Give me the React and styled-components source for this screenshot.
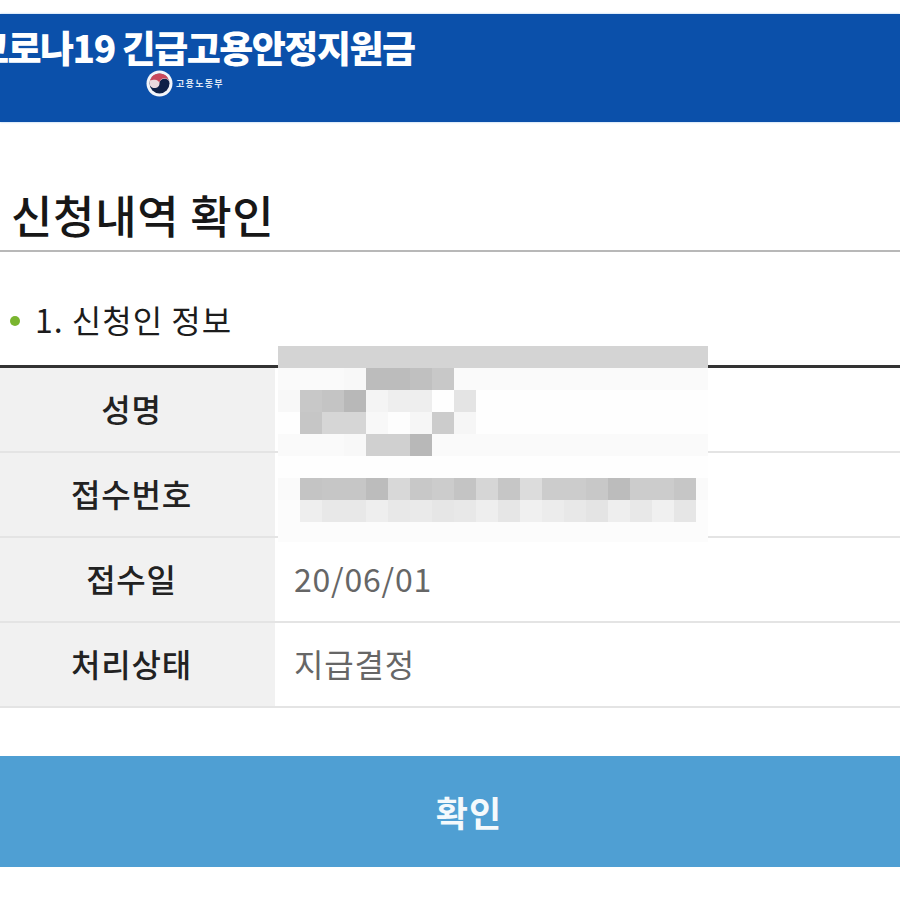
import React from "react";
import styled, { createGlobalStyle } from "styled-components";

const Global = createGlobalStyle`
  html, body { margin: 0; padding: 0; background: #fff; }
  body { font-family: "Noto Sans CJK KR", "Noto Sans", sans-serif; }
`;
const Page = styled.div`
  position: relative; width: 900px; height: 900px; overflow: hidden; background: #fff;
  padding-top: 14px; box-sizing: border-box; color: #1c1c1c;
`;
const Banner = styled.header`
  height: 108px; background: #0b50aa; box-sizing: border-box; padding-top: 11px;
  box-shadow: 0 0 2px #9cc4ee; display: flex; flex-direction: column; overflow: hidden;
`;
const BannerTitle = styled.div`
  font-size: 37px; font-weight: 900; line-height: 44px; color: #fff; white-space: nowrap;
  margin-left: -25px; letter-spacing: -1.5px;
`;
const Ministry = styled.div`
  display: flex; align-items: center; gap: 3px; margin: 0 0 0 146px; height: 28px;
`;
const MinistryName = styled.span`
  font-size: 9px; font-weight: 700; color: #dfe8f5; letter-spacing: 1.3px;
`;
const Heading = styled.h1`
  margin: 0; height: 130px; box-sizing: border-box; padding: 64px 0 0 11px;
  font-size: 45px; line-height: 58px; font-weight: 500; color: #171717;
  border-bottom: 2px solid #b8b8b8; letter-spacing: 0.7px;
`;
const Section = styled.h2`
  margin: 0; height: 113px; box-sizing: border-box; padding: 44px 0 0 10px;
  display: flex; align-items: flex-start; gap: 15px;
  font-size: 32px; line-height: 46px; font-weight: 400; color: #1c1c1c; letter-spacing: 1px;
`;
const Dot = styled.i`
  width: 10px; height: 10px; border-radius: 50%; background: #7ab52f; margin-top: 20px; flex: none;
`;
const Table = styled.div`
  border-top: 3px solid #333;
`;
const Row = styled.div`
  display: grid; grid-template-columns: 275px 1fr; height: 85px; box-sizing: border-box;
  border-bottom: 2px solid #e4e4e4; font-size: 32px;
`;
const Label = styled.div`
  background: #f1f1f1; display: flex; align-items: center; justify-content: center;
  font-weight: 500; color: #222; padding: 0 12px 4px 0; letter-spacing: 0.8px;
`;
const Value = styled.div`
  display: flex; align-items: center; padding: 0 0 4px 19px; color: #666; font-weight: 400;
  letter-spacing: 0.8px;
`;
const ConfirmButton = styled.button`
  display: flex; align-items: center; justify-content: center; width: 100%; height: 111px;
  margin-top: 48px; border: 0; padding: 0 0 0 38px; background: #4f9fd3; color: #f4f9fc;
  font: 700 35px "Noto Sans CJK KR", sans-serif; letter-spacing: 1px;
`;
const Mosaic = styled.div`
  position: absolute; left: 278px; top: 346px; width: 430px; display: grid;
  grid-template-columns: repeat(20, 22px); grid-auto-rows: 22px; overflow: hidden; height: 196px;
`;
const Tile = styled.div`
  background: ${(p) => p.$c};
`;

const W = "fefefe", F = "fafafa";
const rows = [
  Array(20).fill("d4d4d4"),
  [F, F, F, "f8f8f8", "bcbcbc", "bcbcbc", "c0c0c0", "c8c8c8", ...Array(12).fill(F)],
  ["f8f8f8", "c8c8c8", "c4c4c4", "b8b8b8", "f4f4f4", "eeeeee", "eeeeee", W, "e4e4e4", ...Array(11).fill(W)],
  [W, "c6c6c6", "d6d6d6", "d6d6d6", "f8f8f8", "fdfdfd", "f6f6f6", "cccccc", "f6f6f6", ...Array(11).fill(W)],
  [F, F, F, "f8f8f8", "d0d0d0", "d0d0d0", "b8b8b8", ...Array(13).fill(F)],
  Array(20).fill(W),
  [F, "c4c4c4", "c6c6c6", "c6c6c6", "bcbcbc", "d8d8d8", "c8c8c8", "cccccc", "c4c4c4", "d6d6d6", "c6c6c6", "dcdcdc", "cccccc", "cccccc", "c8c8c8", "bcbcbc", "cccccc", "cccccc", "c6c6c6", F],
  ["fcfcfc", "eeeeee", "e8e8e8", "e8e8e8", "eeeeee", "e8e8e8", "eaeaea", "e6e6e6", "e8e8e8", "eeeeee", "e6e6e6", "f0f0f0", "ececec", "e8e8e8", "e4e4e4", "eeeeee", "e8e8e8", "f0f0f0", "e6e6e6", "fcfcfc"],
  Array(20).fill("fcfcfc"),
];

const Emblem = () => (
  <svg width="27" height="27" viewBox="0 0 27 27" aria-hidden="true">
    <circle cx="13.5" cy="13.5" r="13" fill="#f2f5fa" />
    <circle cx="13.5" cy="13.5" r="10" fill="#0e2148" />
    <path d="M3.5 13.5a10 10 0 0 1 20 0c0-2.8-2.2-4.8-4.9-4.8s-5.1 2-5.1 4.8-2.3 4.6-5 4.6-5-2-5-4.6z" fill="#e9d9de" />
    <path d="M4 10.5a10 10 0 0 1 19 0c-1-1.500-2.600-2.200-4.400-2.200-2.800 0-5.100 2-5.100 4.800-.6-2-2.400-3.300-4.600-3.300-2 0-3.800.2-4.900.7z" fill="#c9485c" />
  </svg>
);

const info = [
  ["성명", ""],
  ["접수번호", ""],
  ["접수일", "20/06/01"],
  ["처리상태", "지급결정"],
];

export default function App() {
  return (
    <Page>
      <Global />
      <Banner>
        <BannerTitle>코로나19 긴급고용안정지원금</BannerTitle>
        <Ministry>
          <Emblem />
          <MinistryName>고용노동부</MinistryName>
        </Ministry>
      </Banner>
      <Heading>신청내역 확인</Heading>
      <Section>
        <Dot />
        1. 신청인 정보
      </Section>
      <Table>
        {info.map(([k, v]) => (
          <Row key={k}>
            <Label>{k}</Label>
            <Value>{v}</Value>
          </Row>
        ))}
      </Table>
      <ConfirmButton>확인</ConfirmButton>
      <Mosaic>
        {rows.flat().map((c, i) => (
          <Tile key={i} $c={"#" + c} />
        ))}
      </Mosaic>
    </Page>
  );
}
